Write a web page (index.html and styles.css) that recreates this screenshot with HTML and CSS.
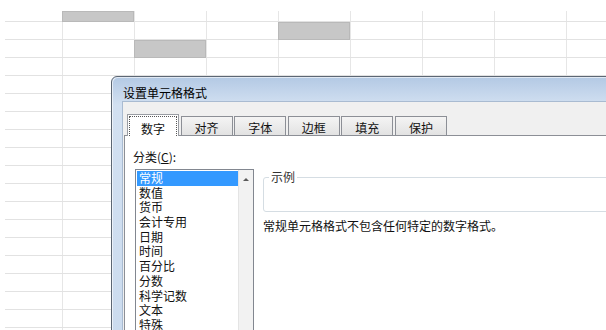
FILE: index.html
```html
<!DOCTYPE html>
<html lang="zh-CN">
<head>
    <meta charset="UTF-8">
    <title>设置单元格格式</title>
    <link rel="stylesheet" href="styles.css">
</head>
<body>
    <div class="sheet">
        <div class="sel cell-a"></div>
        <div class="sel cell-b"></div>
        <div class="sel cell-c"></div>
    </div>

    <div class="dialog">
        <div class="titlebar">设置单元格格式</div>
        <div class="client">
            <div class="tabs">
                <div class="tab active"><span>数字</span></div>
                <div class="tab"><span>对齐</span></div>
                <div class="tab"><span>字体</span></div>
                <div class="tab"><span>边框</span></div>
                <div class="tab"><span>填充</span></div>
                <div class="tab"><span>保护</span></div>
            </div>
            <div class="panel">
                <div class="cat-label">分类(<u>C</u>):</div>
                <div class="listbox">
                    <ul class="items">
                        <li class="selected">常规</li>
                        <li>数值</li>
                        <li>货币</li>
                        <li>会计专用</li>
                        <li>日期</li>
                        <li>时间</li>
                        <li>百分比</li>
                        <li>分数</li>
                        <li>科学记数</li>
                        <li>文本</li>
                        <li>特殊</li>
                    </ul>
                    <div class="scrollbar">
                        <div class="arrow-up"></div>
                    </div>
                </div>
                <div class="detail">
                    <fieldset class="sample">
                        <legend>示例</legend>
                    </fieldset>
                    <p class="desc">常规单元格格式不包含任何特定的数字格式。</p>
                </div>
            </div>
        </div>
    </div>
</body>
</html>
```

FILE: styles.css
```css
* {
    margin: 0;
    padding: 0;
    box-sizing: border-box;
}

body {
    width: 606px;
    height: 330px;
    position: relative;
    overflow: hidden;
    padding: 11px 0 0 5px;
    background: #fff;
    font-family: "Noto Sans CJK SC", "Microsoft YaHei", sans-serif;
    font-size: 12px;
    color: #111;
}

/* spreadsheet behind the dialog */
.sheet {
    height: 330px;
    display: grid;
    grid-template-columns: 57px repeat(8, 72px);
    grid-template-rows: 11px repeat(17, 18px);
    background-image:
        repeating-linear-gradient(to bottom, transparent 0 17px, #e2e2e2 17px 18px),
        repeating-linear-gradient(to right, transparent 0 71px, #e6e6e6 71px 72px);
    background-position: 0 -7px, -14px 0;
}

.sel {
    background: #c7c7c7;
    border: 1px solid #b9b9b9;
}

.cell-a { grid-column: 2; grid-row: 1; }
.cell-b { grid-column: 5; grid-row: 2; }
.cell-c { grid-column: 3; grid-row: 3; }

/* dialog */
.dialog {
    position: absolute;
    left: 111px;
    top: 76px;
    width: 520px;
    height: 280px;
    border: 1px solid #5c6673;
    border-radius: 6px 0 0 0;
    background: linear-gradient(to bottom, #b3c9e4 0, #d2e0f1 28px, #cbdbee 100%);
    display: flex;
    flex-direction: column;
    box-shadow: inset 1px 1px 0 rgba(255,255,255,0.6);
}

.titlebar {
    height: 29px;
    padding: 7px 0 0 11px;
    display: flex;
    align-items: center;
    color: #000;
}

.client {
    flex: 1;
    margin-left: 10px;
    background: #f0f0f0;
    border-top: 1px solid #a9bbd1;
    border-left: 1px solid #a9bbd1;
    padding: 11px 0 0 1px;
    display: flex;
    flex-direction: column;
}

.tabs {
    display: flex;
    align-items: flex-end;
    height: 22px;
    padding-left: 3px;
    position: relative;
    z-index: 1;
}

.tab {
    width: 52px;
    height: 19px;
    margin-right: 1.6px;
    border: 1px solid #8c8f96;
    border-bottom: none;
    background: linear-gradient(to bottom, #f4f4f4, #e2e2e2);
    display: flex;
    align-items: center;
    justify-content: center;
    padding-top: 2px;
}

.tab.active {
    height: 22px;
    margin-bottom: -1px;
    background: #fff;
    border-color: #9a9da3;
    padding: 1px 1px 0;
    align-items: stretch;
}

.tab.active span {
    flex: 1;
    border: 1px dotted #555;
    border-bottom: none;
    display: flex;
    align-items: center;
    justify-content: center;
    padding-top: 3px;
}

.panel {
    flex: 1;
    background: #fff;
    border-top: 1px solid #8c8f96;
    border-left: 1px solid #8c8f96;
    padding: 14px 0 0 8px;
    display: grid;
    grid-template-columns: 121px 1fr;
    grid-template-rows: 14px 1fr;
    column-gap: 9px;
    row-gap: 5px;
}

.cat-label {
    grid-column: 1 / 3;
    line-height: 14px;
}

.listbox {
    margin-left: 2px;
    border: 1px solid #828790;
    display: flex;
    height: 200px;
}

.items {
    list-style: none;
    flex: 1;
    padding: 1px 0 0 1px;
}

.items li {
    height: 14.7px;
    line-height: 14.7px;
    padding-left: 2px;
    white-space: nowrap;
}

.items li.selected {
    background: #3399ff;
    color: #fff;
}

.scrollbar {
    width: 15px;
    background: #f2f2f2;
    border-left: 1px solid #e4e4e4;
    display: flex;
    justify-content: center;
    padding-top: 8px;
}

.arrow-up {
    width: 0;
    height: 0;
    border-left: 3px solid transparent;
    border-right: 3px solid transparent;
    border-bottom: 3px solid #5a5a5a;
}

.detail {
    display: flex;
    flex-direction: column;
}

.sample {
    height: 42px;
    margin-top: 1px;
    border: 1px solid #d5dde3;
    border-radius: 3px;
    padding: 0;
}

.sample legend {
    margin-left: 5px;
    padding: 0 2px;
    line-height: 14px;
    color: #333;
}

.desc {
    margin-top: 7px;
    line-height: 14px;
}
```
